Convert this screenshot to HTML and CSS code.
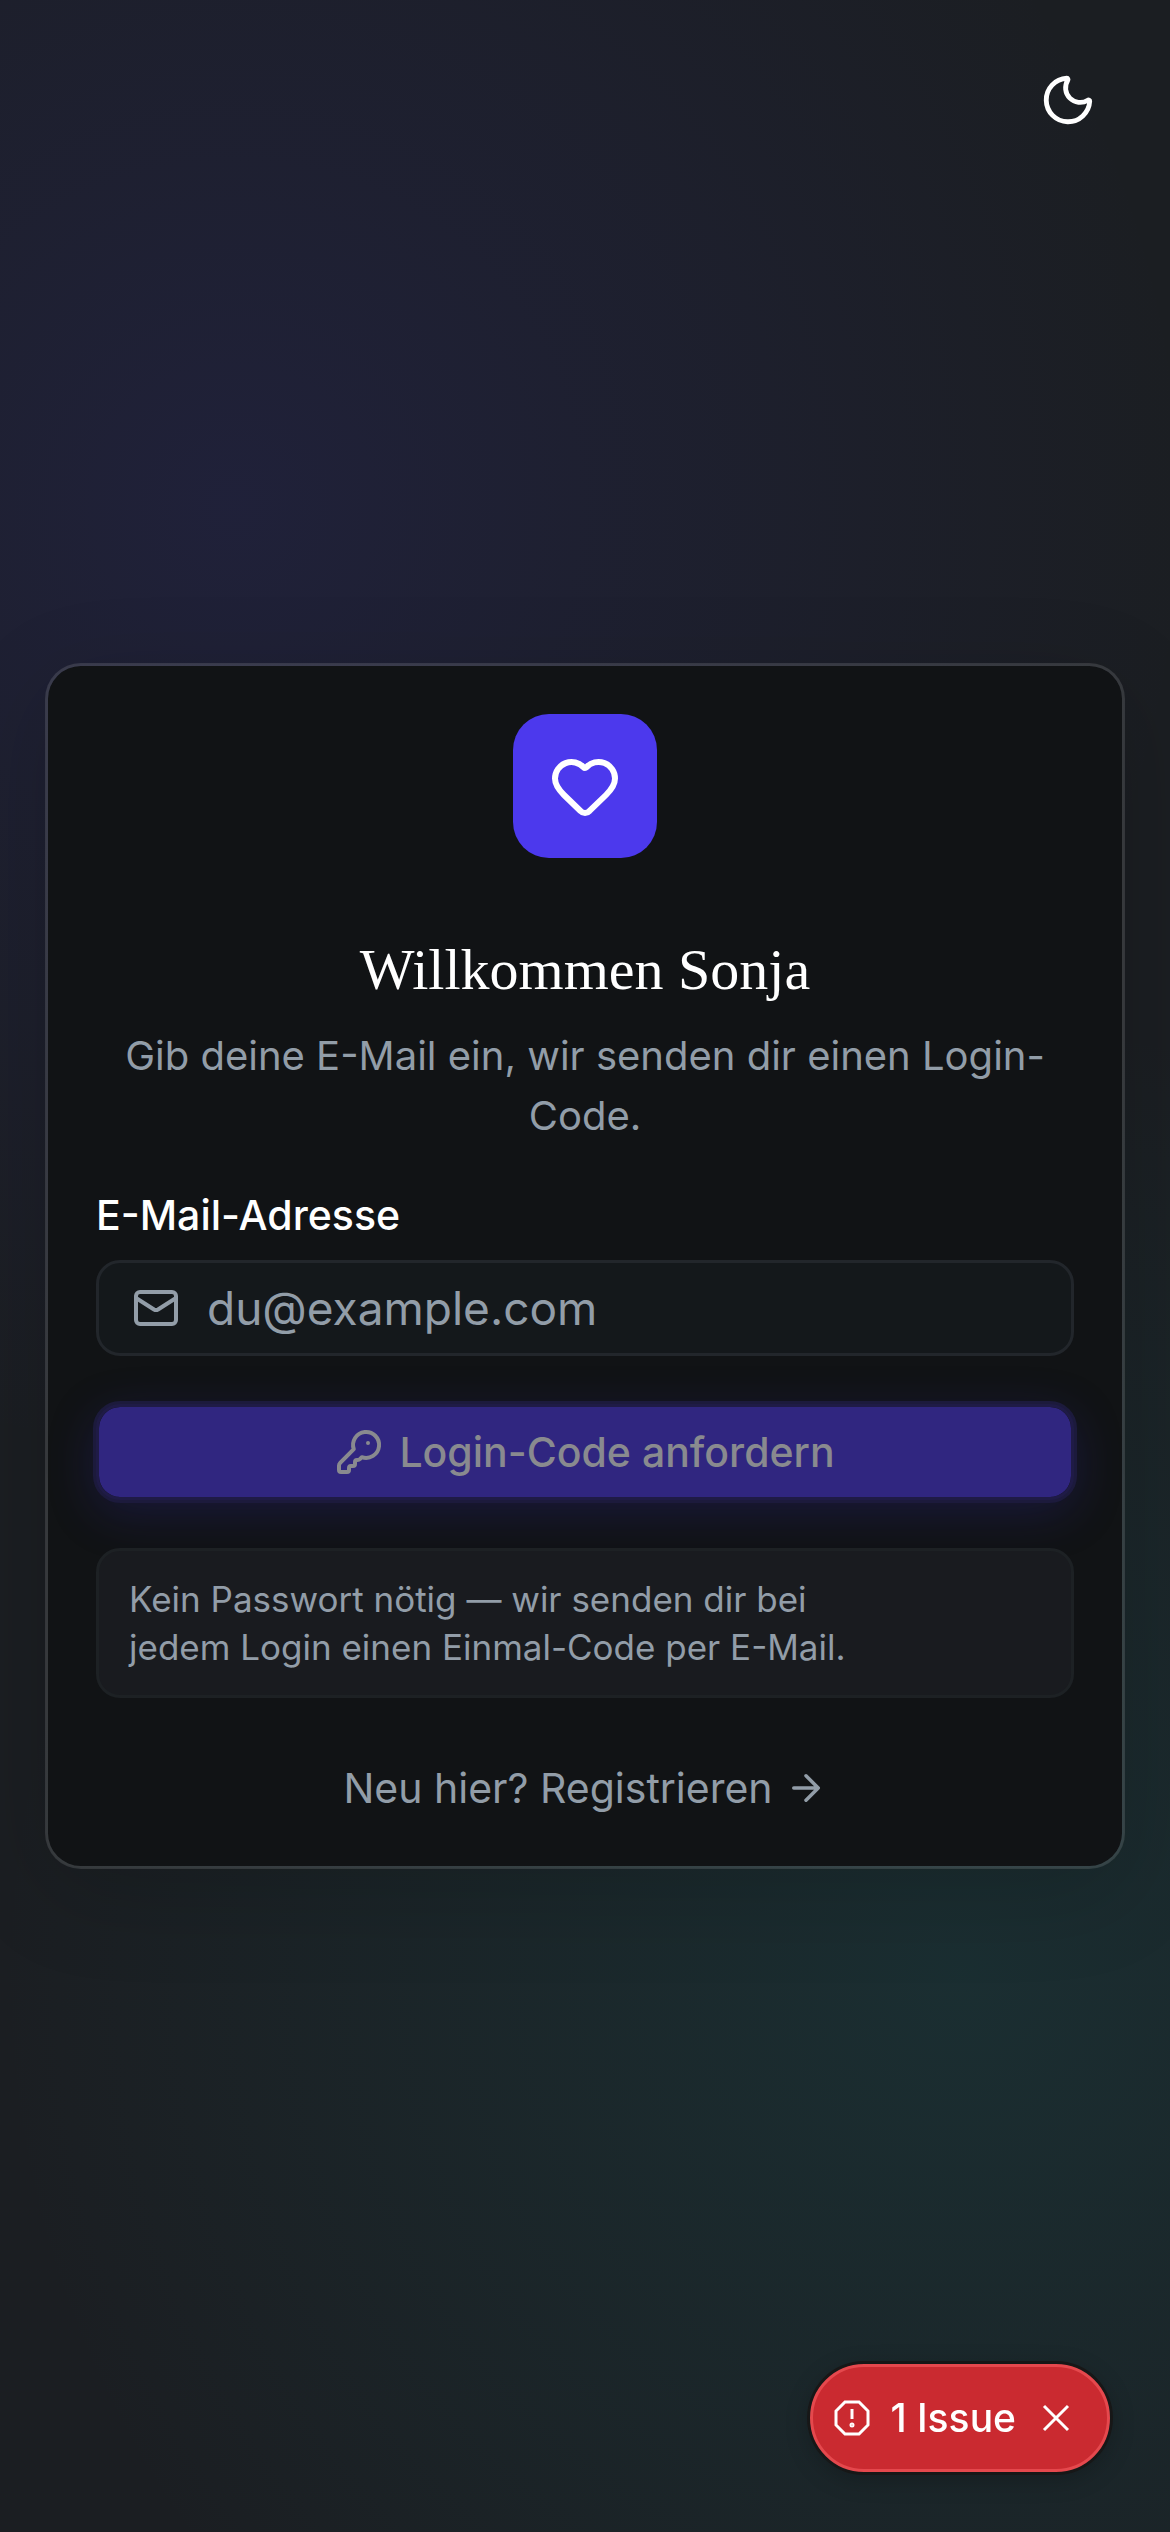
FILE: index.html
```html
<!DOCTYPE html>
<html lang="de">
<head>
<meta charset="utf-8">
<meta name="viewport" content="width=device-width, initial-scale=1">
<title>Login</title>
<link rel="stylesheet" href="styles.css">
</head>
<body>
<button class="theme-toggle" type="button" aria-label="Farbschema wechseln">
  <svg class="icon icon-theme" viewBox="0 0 24 24"><path d="M20.985 12.486a9 9 0 1 1-9.473-9.472c.405-.022.617.46.402.803a6 6 0 0 0 8.268 8.268c.344-.215.825-.004.803.401"/></svg>
</button>

<main class="page">
  <section class="card">
    <div class="logo">
      <svg class="icon icon-logo" viewBox="0 0 24 24"><path d="M2 9.5a5.5 5.5 0 0 1 9.591-3.676.56.56 0 0 0 .818 0A5.49 5.49 0 0 1 22 9.5c0 2.29-1.5 4-3 5.5l-5.492 5.313a2 2 0 0 1-3 .019L5 15c-1.5-1.5-3-3.2-3-5.5"/></svg>
    </div>
    <header class="intro">
      <h1 class="title">Willkommen Sonja</h1>
      <p class="subtitle">Gib deine E-Mail ein, wir senden dir einen Login-Code.</p>
    </header>
    <form class="form">
      <div class="field">
        <label class="label" for="email">E-Mail-Adresse</label>
        <div class="input-box">
          <svg class="icon" viewBox="0 0 24 24"><rect x="2" y="4" width="20" height="16" rx="2"/><path d="m22 7-8.991 5.727a2 2 0 0 1-2.009 0L2 7"/></svg>
          <input class="input" id="email" type="email" placeholder="du@example.com">
        </div>
      </div>
      <button class="submit" type="submit" disabled>
        <svg class="icon" viewBox="0 0 24 24"><path d="M2.586 17.414A2 2 0 0 0 2 18.828V21a1 1 0 0 0 1 1h3a1 1 0 0 0 1-1v-1a1 1 0 0 1 1-1h1a1 1 0 0 0 1-1v-1a1 1 0 0 1 1-1h.172a2 2 0 0 0 1.414-.586l.814-.814a6.5 6.5 0 1 0-4-4z"/><circle cx="16.5" cy="7.5" r=".5" fill="currentColor" stroke-width="1"/></svg>
        Login-Code anfordern
      </button>
      <p class="hint">Kein Passwort nötig — wir senden dir bei<br>jedem Login einen Einmal-Code per E-Mail.</p>
    </form>
    <a class="register" href="#registrieren">
      Neu hier? Registrieren
      <svg class="icon icon-arrow" viewBox="0 0 24 24"><path d="M5 12h14M12 5l7 7-7 7"/></svg>
    </a>
  </section>
</main>

<aside class="issues">
  <svg class="icon-issue" viewBox="0 0 36 36"><path d="M11 2h14l9 9v14l-9 9H11l-9-9V11z"/><path d="M18 9v10"/><circle cx="18" cy="25" r="1"/></svg>
  <span class="issues-text">1 Issue</span>
  <button class="issues-close" type="button" aria-label="Schließen">
    <svg class="icon-close" viewBox="0 0 28 28"><path d="M2 2l24 24M26 2L2 26"/></svg>
  </button>
</aside>
</body>
</html>
```
FILE: styles.css
```css
:root {
  --muted: #929da8;
  --accent: #4c39ed;
  --card: #111315;
}

* {
  box-sizing: border-box;
}

body {
  margin: 0;
  min-height: 100vh;
  font-family: Inter, "Liberation Sans", sans-serif;
  font-size: 41px;
  line-height: 60px;
  color: #fff;
  background:
    radial-gradient(circle at 20% 20%, rgba(60, 50, 200, 0.14), transparent 960px),
    radial-gradient(circle at 82% 78%, rgba(24, 120, 120, 0.18), transparent 960px),
    #1b1e22;
}

h1, p {
  margin: 0;
}

button, input {
  font: inherit;
  color: inherit;
  border: 0;
  background: none;
  padding: 0;
}

.icon {
  display: block;
  flex: none;
  width: 48px;
  height: 48px;
  fill: none;
  stroke: currentColor;
  stroke-width: 2;
  stroke-linecap: round;
  stroke-linejoin: round;
}

.theme-toggle {
  position: fixed;
  top: 46px;
  right: 48px;
  display: grid;
  place-items: center;
  width: 108px;
  height: 108px;
}

.icon-theme {
  width: 58px;
  height: 58px;
}

.page {
  min-height: 100vh;
  display: flex;
  align-items: center;
  justify-content: center;
  padding: 45px;
}

.card {
  width: 100%;
  max-width: 1200px;
  display: flex;
  flex-direction: column;
  align-items: center;
  padding: 48px;
  border: 3px solid rgba(255, 255, 255, 0.12);
  border-radius: 36px;
  background: var(--card);
  background-clip: padding-box;
  box-shadow: 0 24px 96px rgba(0, 0, 0, 0.16);
}

.logo {
  display: grid;
  place-items: center;
  width: 144px;
  height: 144px;
  border-radius: 36px;
  background: var(--accent);
}

.icon-logo {
  width: 72px;
  height: 72px;
}

.intro {
  display: flex;
  flex-direction: column;
  gap: 16px;
  margin-top: 72px;
  text-align: center;
}

.title {
  font-family: "Liberation Serif", serif;
  font-size: 58px;
  line-height: 80px;
  font-weight: 400;
}

.subtitle {
  color: var(--muted);
  font-size: 40px;
}

.form {
  align-self: stretch;
  display: flex;
  flex-direction: column;
  gap: 48px;
  margin-top: 48px;
}

.field {
  display: flex;
  flex-direction: column;
  gap: 24px;
}

.label {
  line-height: 42px;
  font-weight: 500;
}

.input-box {
  display: flex;
  align-items: center;
  gap: 27px;
  height: 96px;
  padding: 0 33px;
  border: 3px solid #22262b;
  border-radius: 24px;
  background: #14181b;
  color: var(--muted);
}

.input {
  flex: 1;
  min-width: 0;
  height: 90px;
  font-size: 46px;
  outline: none;
}

.input::placeholder {
  color: var(--muted);
  opacity: 1;
}

.submit {
  display: flex;
  align-items: center;
  justify-content: center;
  gap: 16px;
  height: 96px;
  border: 3px solid #1f1b46;
  border-radius: 24px;
  background: #302680;
  background-clip: padding-box;
  color: #898a8f;
  font-weight: 500;
  box-shadow:
    0 0 0 3px #1c1a3c,
    0 12px 48px rgba(48, 38, 160, 0.28);
}

.hint {
  padding: 24px 30px;
  border: 3px solid #1d2124;
  border-radius: 24px;
  background: #191b1f;
  color: var(--muted);
  font-size: 35px;
  line-height: 48px;
}

.register {
  display: flex;
  align-items: center;
  gap: 12px;
  margin-top: 60px;
  color: var(--muted);
  text-decoration: none;
}

.icon-arrow {
  width: 42px;
  height: 42px;
}

.issues {
  position: fixed;
  right: 60px;
  bottom: 60px;
  display: flex;
  align-items: center;
  height: 108px;
  padding: 0 37px 0 21px;
  border: 3px solid #e5484d;
  border-radius: 54px;
  background: #ca2a30;
  box-shadow:
    0 0 0 3px #171717,
    0 6px 24px rgba(0, 0, 0, 0.25);
}

.issues-text {
  margin: 0 26px 0 20px;
  font-size: 39px;
  font-weight: 500;
}

.icon-issue,
.icon-close {
  display: block;
  fill: none;
  stroke: #fff;
  stroke-width: 3;
}

.icon-issue {
  width: 36px;
  height: 36px;
}

.icon-close {
  width: 28px;
  height: 28px;
}
```
